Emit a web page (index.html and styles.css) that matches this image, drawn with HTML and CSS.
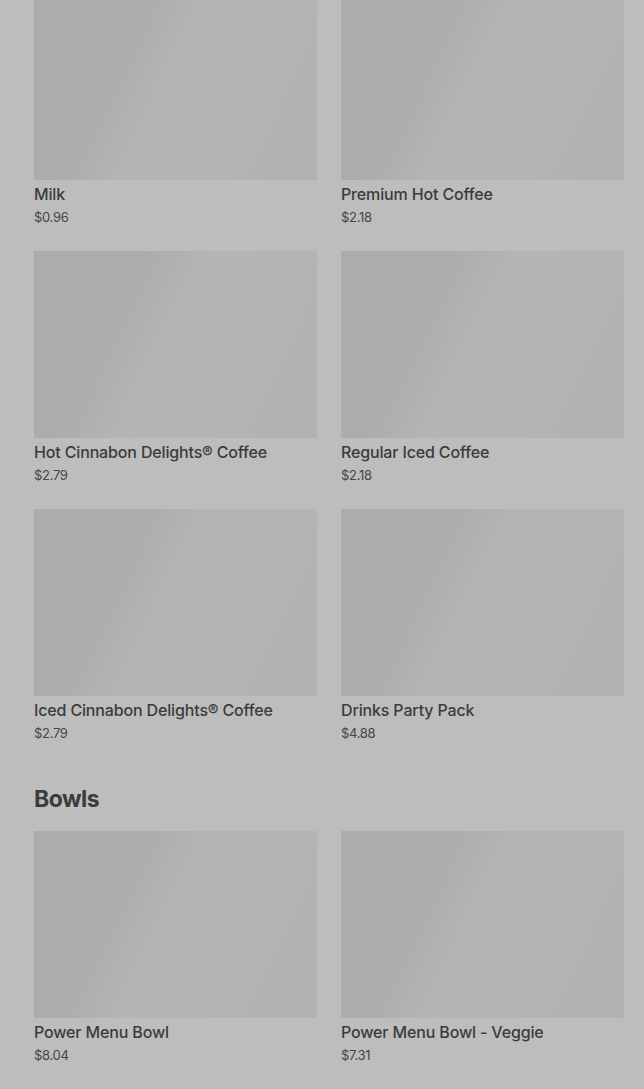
FILE: index.html
```html
<!DOCTYPE html>
<html lang="en">
<head>
  <meta charset="UTF-8" />
  <meta name="viewport" content="width=device-width, initial-scale=1.0"/>
  <title>Menu</title>
  <link rel="stylesheet" href="styles.css">
</head>
<body>
  <div class="menu">
    <div class="grid grid-top">
      <div class="item">
        <div class="thumb thumb-cut"></div>
        <div class="name">Milk</div>
        <div class="price">$0.96</div>
      </div>
      <div class="item">
        <div class="thumb thumb-cut"></div>
        <div class="name">Premium Hot Coffee</div>
        <div class="price">$2.18</div>
      </div>
      <div class="item">
        <div class="thumb"></div>
        <div class="name">Hot Cinnabon Delights® Coffee</div>
        <div class="price">$2.79</div>
      </div>
      <div class="item">
        <div class="thumb"></div>
        <div class="name">Regular Iced Coffee</div>
        <div class="price">$2.18</div>
      </div>
      <div class="item">
        <div class="thumb"></div>
        <div class="name">Iced Cinnabon Delights® Coffee</div>
        <div class="price">$2.79</div>
      </div>
      <div class="item">
        <div class="thumb"></div>
        <div class="name">Drinks Party Pack</div>
        <div class="price">$4.88</div>
      </div>
    </div>

    <h2 class="section-title">Bowls</h2>
    <div class="grid">
      <div class="item">
        <div class="thumb"></div>
        <div class="name">Power Menu Bowl</div>
        <div class="price">$8.04</div>
      </div>
      <div class="item">
        <div class="thumb"></div>
        <div class="name">Power Menu Bowl - Veggie</div>
        <div class="price">$7.31</div>
      </div>
    </div>
  </div>
</body>
</html>
```

FILE: styles.css
```css
body {
  margin: 0;
  background: #bdbdbd;
  font-family: Inter, "Noto Sans", Arial, sans-serif;
  color: #3b3b3b;
}

.menu {
  padding: 0 20px 0 34px;
}

.grid {
  display: grid;
  grid-template-columns: 1fr 1fr;
  column-gap: 24px;
  row-gap: 24px;
}

.thumb {
  height: 187px;
  background: linear-gradient(116deg, #acacac 0%, #acacac 30%, #b5b5b5 48%, #b4b4b4 70%, #b1b1b1 100%);
}

.thumb-cut {
  height: 180px;
}

.name {
  margin-top: 3px;
  font-size: 16px;
  font-weight: 500;
  line-height: 22px;
  letter-spacing: -0.15px;
  color: #3b3b3b;
}

.price {
  margin-top: 2px;
  font-size: 13px;
  line-height: 20px;
  color: #454545;
  letter-spacing: -0.3px;
}

.section-title {
  margin: 42px 0 18px;
  font-size: 23px;
  font-weight: 700;
  line-height: 28px;
  letter-spacing: -0.5px;
  color: #3b3b3b;
}
```
